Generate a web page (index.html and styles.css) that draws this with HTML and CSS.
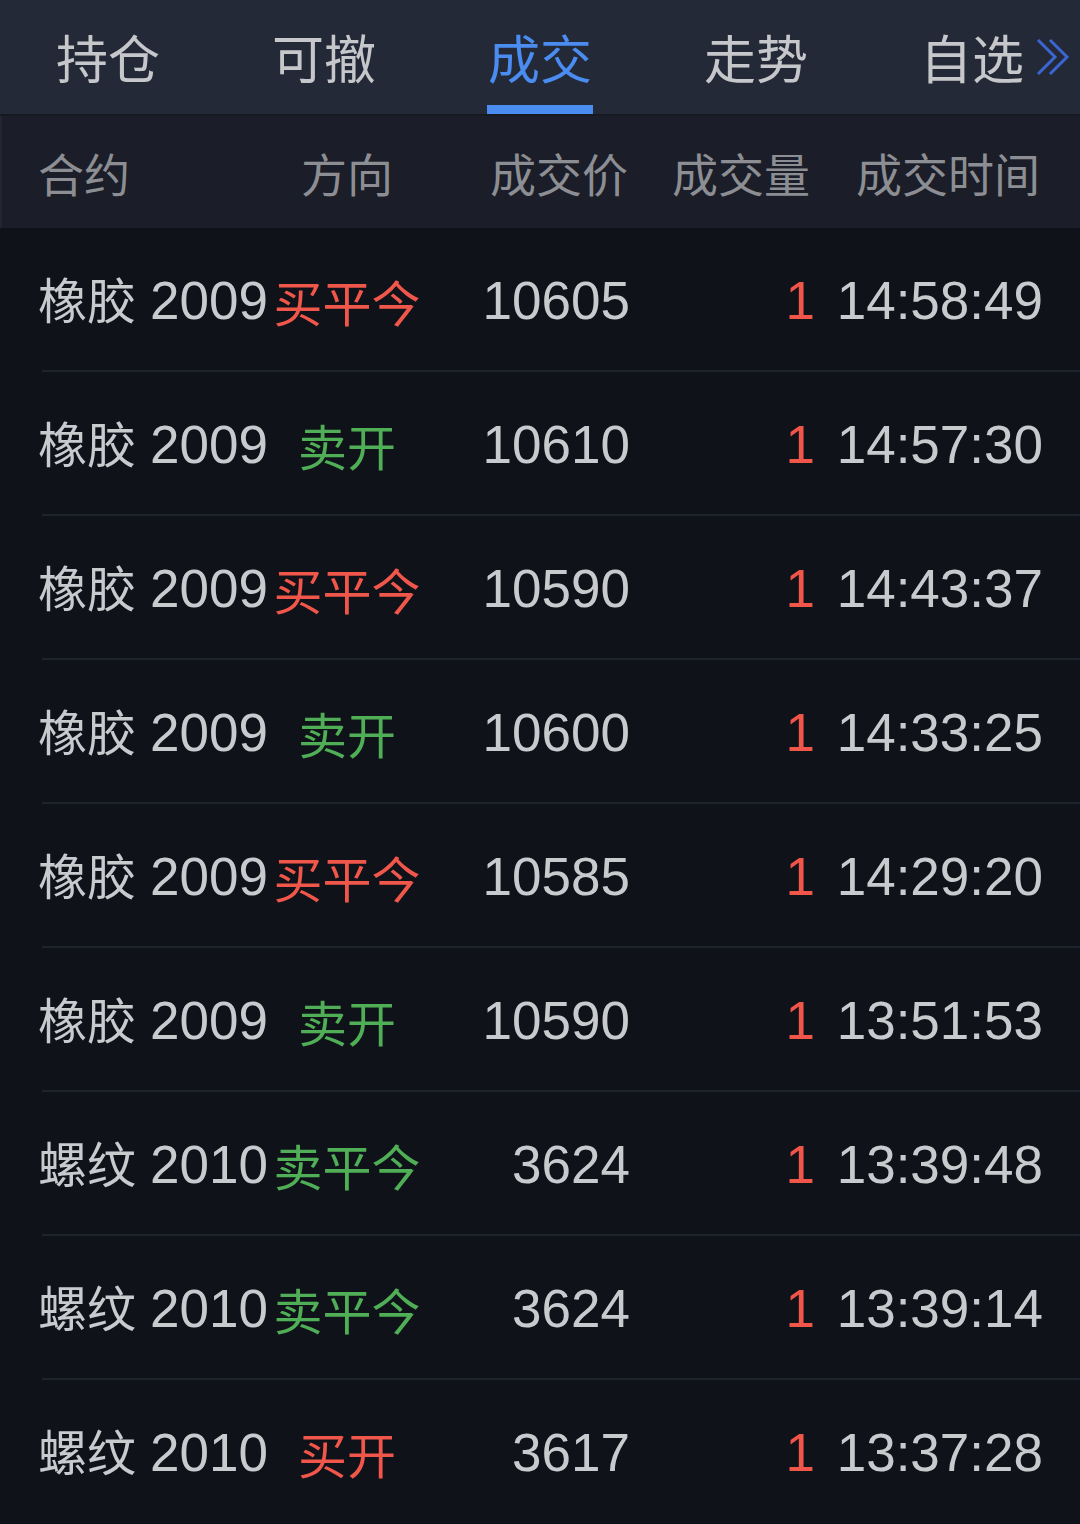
FILE: index.html
```html
<!DOCTYPE html>
<html lang="zh-CN">
<head>
<meta charset="utf-8">
<title>成交</title>
<link rel="stylesheet" href="styles.css">
</head>
<body>
<div class="app">
  <nav class="tabs">
    <div class="tab"><span class="tab-label">持仓</span></div>
    <div class="tab"><span class="tab-label">可撤</span></div>
    <div class="tab active"><span class="tab-label">成交</span><span class="underline"></span></div>
    <div class="tab"><span class="tab-label">走势</span></div>
    <div class="tab"><span class="tab-label more">自选<svg class="chev" viewBox="0 0 34 38" width="34" height="38"><polyline points="2,2 19,19 2,36" /><polyline points="14,2 31,19 14,36" /></svg></span></div>
  </nav>
  <div class="head">
    <div class="c-name">合约</div>
    <div class="c-dir">方向</div>
    <div class="c-price">成交价</div>
    <div class="c-vol">成交量</div>
    <div class="c-time">成交时间</div>
  </div>
  <div class="list">
    <div class="row"><div class="c-name">橡胶<span class="code">2009</span></div><div class="c-dir red">买平今</div><div class="c-price num">10605</div><div class="c-vol num red">1</div><div class="c-time num">14:58:49</div></div>
    <div class="row"><div class="c-name">橡胶<span class="code">2009</span></div><div class="c-dir green">卖开</div><div class="c-price num">10610</div><div class="c-vol num red">1</div><div class="c-time num">14:57:30</div></div>
    <div class="row"><div class="c-name">橡胶<span class="code">2009</span></div><div class="c-dir red">买平今</div><div class="c-price num">10590</div><div class="c-vol num red">1</div><div class="c-time num">14:43:37</div></div>
    <div class="row"><div class="c-name">橡胶<span class="code">2009</span></div><div class="c-dir green">卖开</div><div class="c-price num">10600</div><div class="c-vol num red">1</div><div class="c-time num">14:33:25</div></div>
    <div class="row"><div class="c-name">橡胶<span class="code">2009</span></div><div class="c-dir red">买平今</div><div class="c-price num">10585</div><div class="c-vol num red">1</div><div class="c-time num">14:29:20</div></div>
    <div class="row"><div class="c-name">橡胶<span class="code">2009</span></div><div class="c-dir green">卖开</div><div class="c-price num">10590</div><div class="c-vol num red">1</div><div class="c-time num">13:51:53</div></div>
    <div class="row"><div class="c-name">螺纹<span class="code">2010</span></div><div class="c-dir green">卖平今</div><div class="c-price num">3624</div><div class="c-vol num red">1</div><div class="c-time num">13:39:48</div></div>
    <div class="row"><div class="c-name">螺纹<span class="code">2010</span></div><div class="c-dir green">卖平今</div><div class="c-price num">3624</div><div class="c-vol num red">1</div><div class="c-time num">13:39:14</div></div>
    <div class="row"><div class="c-name">螺纹<span class="code">2010</span></div><div class="c-dir red">买开</div><div class="c-price num">3617</div><div class="c-vol num red">1</div><div class="c-time num">13:37:28</div></div>
  </div>
</div>
</body>
</html>
```

FILE: styles.css
```css
* { box-sizing: border-box; }
html, body {
  margin: 0;
  padding: 0;
  background: #0f1218;
}
body {
  font-family: "Noto Sans CJK SC", "Liberation Sans", sans-serif;
  color: #c9cacd;
}
.app {
  width: 1080px;
  height: 1524px;
  overflow: hidden;
  background: #0f1218;
}

/* tabs */
.tabs {
  display: grid;
  grid-template-columns: repeat(5, 1fr);
  height: 116px;
  background: #242938;
  border-bottom: 2px solid #161920;
}
.tab {
  position: relative;
  display: flex;
  align-items: center;
  justify-content: center;
  font-size: 52px;
  line-height: 1;
  color: #c6c7ca;
}
.tab.active { color: #4a8cf0; }
.tab-label { position: relative; }
.underline {
  position: absolute;
  left: 50%;
  bottom: 0;
  width: 106px;
  height: 9px;
  margin-left: -53px;
  background: #4a8cf0;
}
.chev {
  position: absolute;
  left: 100%;
  top: 50%;
  margin-left: 12px;
  margin-top: -19px;
  fill: none;
  stroke: #3b66d2;
  stroke-width: 3;
}

/* columns */
.head, .row {
  display: grid;
  grid-template-columns: 234px 150px 208px 182px 1fr;
  padding: 0 37px 0 38px;
  align-items: center;
  white-space: nowrap;
}
.c-dir { text-align: center; }
.c-price, .c-vol, .c-time { text-align: right; }

.head {
  height: 112px;
  background: #1b1e28;
  border-left: 2px solid #23262f;
  padding-left: 36px;
  font-size: 46px;
  color: #8c8e93;
}
.head .c-price { margin-right: 2px; }
.head .c-vol { margin-right: 2px; }
.head .c-time { margin-right: 3px; }

.row {
  position: relative;
  height: 144px;
  font-size: 49px;
  line-height: 1;
}
.row::after {
  content: "";
  position: absolute;
  left: 42px;
  right: 0;
  bottom: 0;
  height: 2px;
  background: #1e222b;
}
.row:last-child::after { display: none; }

.code, .num {
  font-family: "Liberation Sans", "Noto Sans CJK SC", sans-serif;
  font-size: 53px;
}
.code { margin-left: 14px; }
.c-vol.num { margin-right: -3px; }

.red { color: #f0574a; }
.green { color: #4fae56; }
```
